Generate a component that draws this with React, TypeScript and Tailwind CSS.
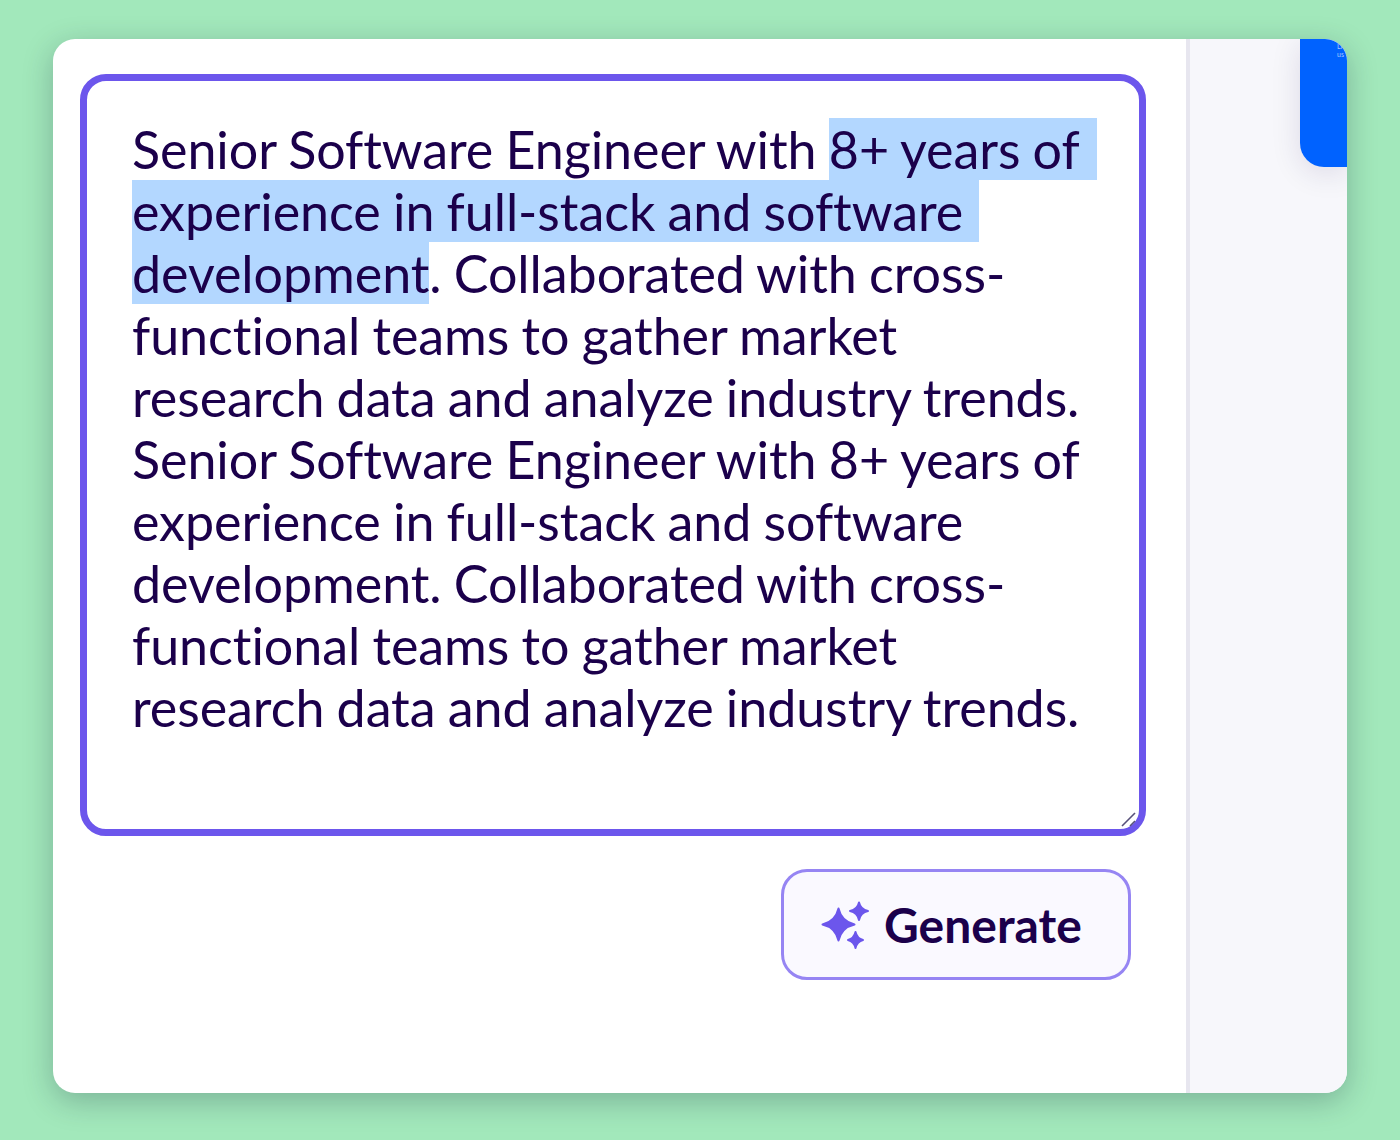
export default function App() {
  return (
    <div className="h-[1140px] overflow-hidden bg-[#a2e8bb] px-[53px] pt-[39px] font-['Lato','Noto_Sans',sans-serif] [font-variant-ligatures:none]">
      <div className="relative flex h-[1054px] overflow-hidden rounded-[22px] bg-white shadow-[0_8px_30px_rgba(20,40,60,0.28)]">
        <main className="flex w-[1133px] shrink-0 flex-col items-start pl-[27px] pt-[35px]">
          <div className="relative h-[762px] w-[1066px] rounded-[26px] border-[7.5px] border-[#6c56ec] pl-[45px] pr-[40px] pt-[37px] text-[52px] leading-[62px] tracking-[-0.06px] text-[#1b004b] [word-spacing:-1px]">
            Senior Software Engineer with{" "}
            <span className="bg-[#b3d7ff]">
              8+ years of
              <span className="pr-[6px]">&nbsp;</span>
              <br />
              experience in full-stack and software
              <span className="pr-[4px]">&nbsp;</span>
              <br />
              development
            </span>
            . Collaborated with cross-functional teams to gather market research data and analyze industry trends. Senior
            Software Engineer with 8+ years of experience in full-stack and software development. Collaborated with
            cross-functional teams to gather market research data and analyze industry trends.
            <svg className="absolute bottom-0 right-0" width="20" height="20" viewBox="0 0 20 20" fill="none" aria-hidden="true">
              <path d="M3 17L16 4" stroke="#57507a" strokeWidth="1.6" />
              <path d="M11 17L16 12" stroke="#57507a" strokeWidth="1.6" />
            </svg>
          </div>
          <button className="ml-[701px] mt-[33px] flex h-[111px] w-[350px] items-center justify-start gap-[14px] rounded-[26px] border-[3.5px] border-[#9685f3] bg-[#faf9ff] pl-[36px] text-[48px] font-bold text-[#1b004b]">
            <svg width="50" height="50" viewBox="0 0 50 50" fill="#6c56ec" stroke="#6c56ec" strokeWidth="2" strokeLinejoin="round" aria-hidden="true">
              <path d="M18.5 8.5Q21.5 21.5 34.5 24.5Q21.5 27.5 18.5 40.5Q15.5 27.5 2.5 24.5Q15.5 21.5 18.5 8.5Z" />
              <path d="M39 2.5Q40.5 9.5 48 11Q40.5 12.5 39 20Q37.5 12.5 30 11Q37.5 9.5 39 2.5Z" />
              <path d="M35.5 32Q37 38.5 43 40Q37 41.5 35.5 48Q34 41.5 28 40Q34 38.5 35.5 32Z" />
            </svg>
            Generate
          </button>
        </main>
        <aside className="flex-1 border-l-4 border-[#e7e6ef] bg-[#f7f7fb]" />
        <div className="absolute right-0 top-0 h-[128px] w-[47px] overflow-hidden rounded-bl-[24px] bg-[#0062ff] pl-[37px] text-[7px] leading-[8px] text-[#a9c8ff] shadow-[0_6px_30px_rgba(30,20,80,0.12)]">
          <div className="mt-[3px] whitespace-nowrap">Li</div>
          <div className="whitespace-nowrap">us</div>
        </div>
      </div>
    </div>
  );
}
